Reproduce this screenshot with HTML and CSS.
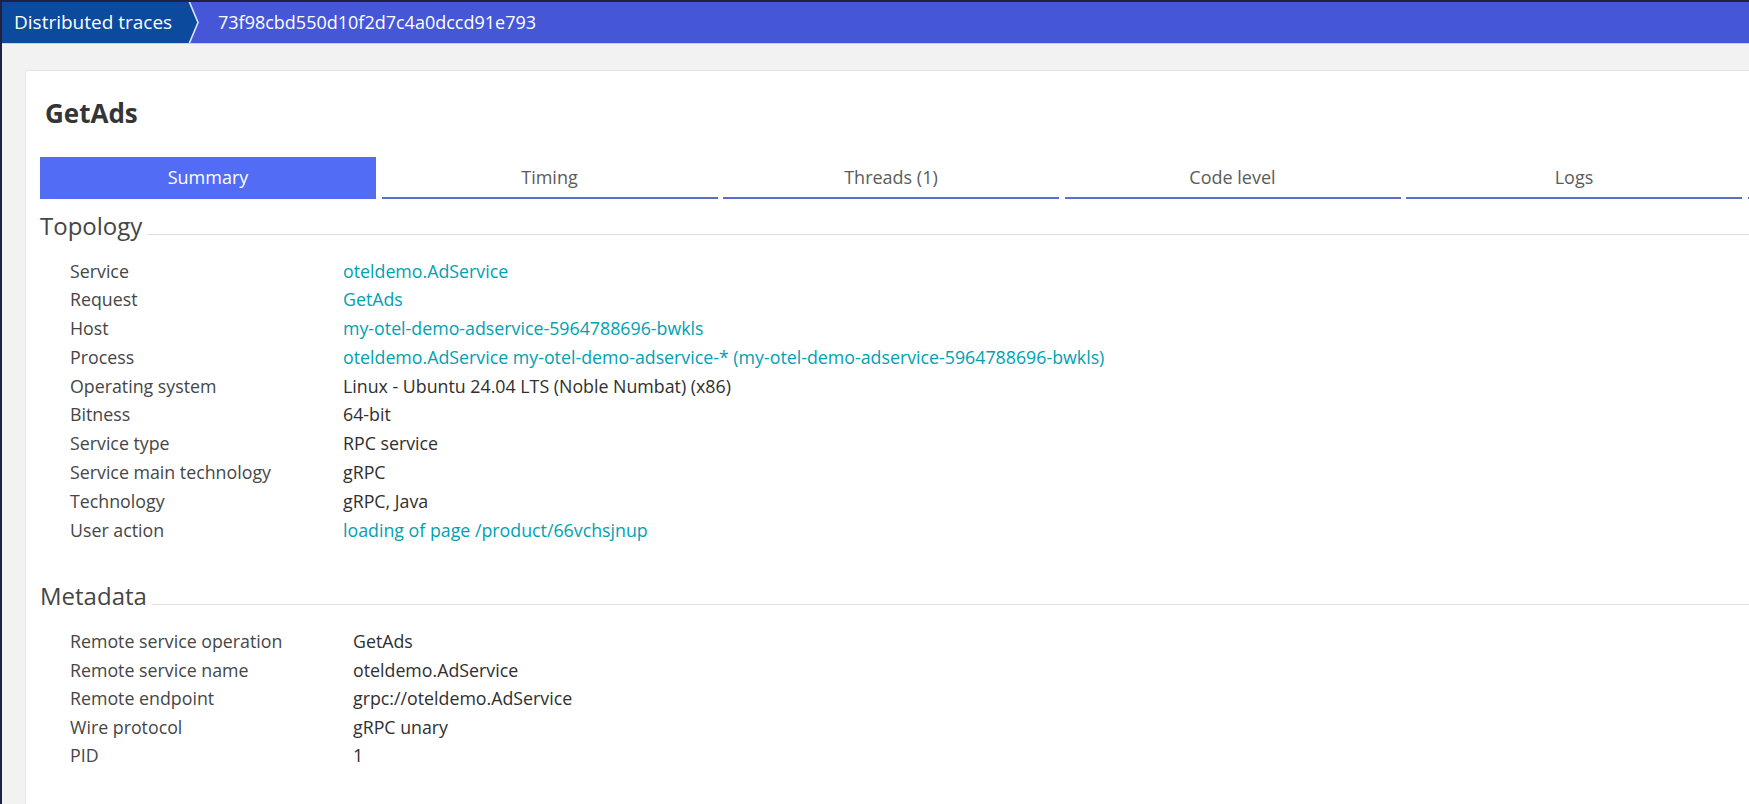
FILE: index.html
```html
<!DOCTYPE html>
<html lang="en">
<head>
<meta charset="utf-8">
<title>GetAds – Distributed traces</title>
<link rel="stylesheet" href="styles.css">
</head>
<body>
<div class="app">
  <header class="crumbs">
    <a class="crumb crumb--root" href="#">Distributed traces</a>
    <svg class="crumb-arrow" width="12" height="41" viewBox="0 0 12 41" aria-hidden="true">
      <polygon points="0,0 1,0 10,20.5 1,41 0,41" fill="#0b4a9c"/>
      <polyline points="1,-1 10,20.5 1,42" fill="none" stroke="#dfe4fb" stroke-width="1.6"/>
    </svg>
    <span class="crumb crumb--current">73f98cbd550d10f2d7c4a0dccd91e793</span>
  </header>

  <main class="page">
    <section class="card">
      <h1 class="title">GetAds</h1>

      <nav class="tabs">
        <a class="tab tab--active" href="#">Summary</a>
        <a class="tab" href="#">Timing</a>
        <a class="tab" href="#">Threads (1)</a>
        <a class="tab" href="#">Code level</a>
        <a class="tab" href="#">Logs</a>
        <span class="tab tab--stub" aria-hidden="true"></span>
      </nav>

      <h2 class="section-title"><span>Topology</span><i class="rule"></i></h2>
      <dl class="kv kv--topology">
        <dt>Service</dt><dd><a href="#">oteldemo.AdService</a></dd>
        <dt>Request</dt><dd><a href="#">GetAds</a></dd>
        <dt>Host</dt><dd><a href="#">my-otel-demo-adservice-5964788696-bwkls</a></dd>
        <dt>Process</dt><dd><a href="#">oteldemo.AdService my-otel-demo-adservice-* (my-otel-demo-adservice-5964788696-bwkls)</a></dd>
        <dt>Operating system</dt><dd>Linux - Ubuntu 24.04 LTS (Noble Numbat) (x86)</dd>
        <dt>Bitness</dt><dd>64-bit</dd>
        <dt>Service type</dt><dd>RPC service</dd>
        <dt>Service main technology</dt><dd>gRPC</dd>
        <dt>Technology</dt><dd>gRPC, Java</dd>
        <dt>User action</dt><dd><a href="#">loading of page /product/66vchsjnup</a></dd>
      </dl>

      <h2 class="section-title section-title--spaced"><span>Metadata</span><i class="rule"></i></h2>
      <dl class="kv kv--metadata">
        <dt>Remote service operation</dt><dd>GetAds</dd>
        <dt>Remote service name</dt><dd>oteldemo.AdService</dd>
        <dt>Remote endpoint</dt><dd>grpc://oteldemo.AdService</dd>
        <dt>Wire protocol</dt><dd>gRPC unary</dd>
        <dt>PID</dt><dd>1</dd>
      </dl>
    </section>
  </main>
</div>
</body>
</html>
```

FILE: styles.css
```css
* { box-sizing: border-box; }

html, body {
  margin: 0;
  padding: 0;
  height: 100%;
  overflow: hidden;
}

body {
  font-family: "Open Sans", "Noto Sans", "DejaVu Sans", sans-serif;
  color: #454646;
  background: #f2f2f2;
}

a { text-decoration: none; color: inherit; }

.app {
  min-height: 100%;
  border-left: 2px solid #1e2240;
  border-top: 2px solid #1e2240;
  background: #f2f2f2;
}

/* ---------- breadcrumbs ---------- */
.crumbs {
  display: flex;
  align-items: stretch;
  height: 42px;
  background: #4556d7;
  border-bottom: 1px solid #c9d0f4;
  white-space: nowrap;
}

.crumb {
  display: flex;
  align-items: center;
  padding-bottom: 2px;
  font-size: 18px;
  color: #ffffff;
}

.crumb--root {
  background: #0b4a9c;
  padding-left: 12px;
  width: 186px;
  font-size: 19px;
}

.crumb-arrow {
  display: block;
  flex: none;
  height: 41px;
}

.crumb--current {
  margin-left: 18px;
}

/* ---------- page / card ---------- */
.page {
  padding: 26px 0 0 23px;
}

.card {
  width: 2120px;
  min-height: 760px;
  background: #ffffff;
  border-top: 1px solid #e4e4e4;
  border-left: 1px solid #e8e8e8;
  border-radius: 3px 0 0 0;
  padding: 24px 0 0 14px;
}

.title {
  margin: 0;
  padding-left: 5px;
  font-size: 26px;
  line-height: 36px;
  font-weight: 700;
  color: #353535;
}

/* ---------- tabs ---------- */
.tabs {
  display: flex;
  gap: 5.5px;
  margin-top: 26px;
}

.tab {
  flex: none;
  width: 336px;
  height: 41.5px;
  display: flex;
  align-items: center;
  justify-content: center;
  font-size: 18px;
  color: #5b5b5b;
  border-bottom: 2px solid #5a6dd2;
  padding-top: 1px;
}

.tab--active {
  background: #526cf5;
  color: #ffffff;
  border-bottom-color: #526cf5;
}

/* ---------- section headings ---------- */
.section-title {
  display: flex;
  align-items: baseline;
  gap: 5px;
  margin: 12px 0 0 0;
  font-size: 24px;
  line-height: 30px;
  font-weight: 400;
  color: #454646;
}

.section-title--spaced {
  margin-top: 37px;
}

.section-title .rule {
  flex: 1;
  height: 1px;
  background: #e0e0e0;
}

/* ---------- key / value lists ---------- */
.kv {
  display: grid;
  margin: 16px 0 0 30px;
  font-size: 17.8px;
  line-height: 28.8px;
}

.kv--topology { grid-template-columns: 273px 1fr; }
.kv--metadata { grid-template-columns: 283px 1fr; line-height: 28.4px; }

.kv dt {
  color: #454646;
  white-space: nowrap;
}

.kv dd {
  margin: 0;
  color: #2f2f2f;
  white-space: nowrap;
}

.kv dd a {
  color: #00a1b2;
}
```
